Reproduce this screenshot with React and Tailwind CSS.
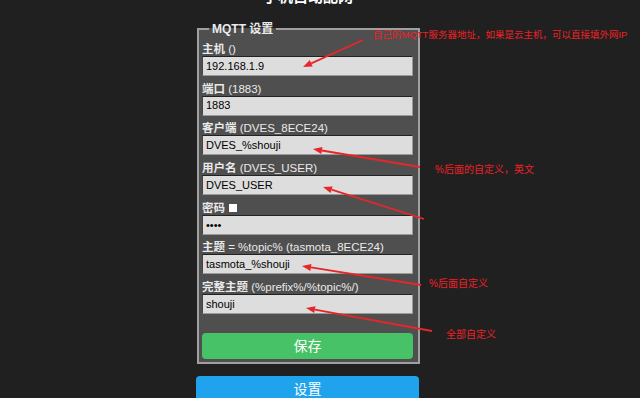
const fields = [
  { bold: '主机', note: ' ()', value: '192.168.1.9' },
  { bold: '端口', note: ' (1883)', value: '1883' },
  { bold: '客户端', note: ' (DVES_8ECE24)', value: 'DVES_%shouji' },
  { bold: '用户名', note: ' (DVES_USER)', value: 'DVES_USER' },
  { bold: '密码', check: true, value: '••••' },
  { bold: '主题', note: ' = %topic% (tasmota_8ECE24)', value: 'tasmota_%shouji' },
  { bold: '完整主题', note: ' (%prefix%/%topic%/)', value: 'shouji' },
];

const arrows = [
  [363, 40, 303, 67],
  [420, 167, 313, 149],
  [424, 219, 323, 187],
  [421, 285, 302, 266],
  [432, 331, 306, 308],
];

const notes = [
  { x: 373, y: 29, size: 'text-[9.5px]', text: '自己的MQTT服务器地址，如果是云主机，可以直接填外网IP' },
  { x: 435, y: 164, size: 'text-[10px]', text: '%后面的自定义，英文' },
  { x: 429, y: 278, size: 'text-[10px]', text: '%后面自定义' },
  { x: 446, y: 329, size: 'text-[10px]', text: '全部自定义' },
];

const Arrow = ({ x1, y1, x2, y2 }) => {
  const a = Math.atan2(y1 - y2, x1 - x2);
  const len = 9, w = 3.5;
  const bx = x2 + Math.cos(a) * len, by = y2 + Math.sin(a) * len;
  const px = -Math.sin(a) * w, py = Math.cos(a) * w;
  return (
    <g>
      <line x1={x1} y1={y1} x2={bx} y2={by} stroke="#e8262a" strokeWidth="1.8" />
      <polygon points={`${x2},${y2} ${bx + px},${by + py} ${bx - px},${by - py}`} fill="#e8262a" />
    </g>
  );
};

const App = () => {
  return (
    <div className="relative h-[398px] w-[640px] overflow-hidden bg-[#202020] text-[#eaeaea] font-['Liberation_Sans','Noto_Sans_CJK_SC',sans-serif]">
      <div className="ml-[196px] w-[224px]">
        <h2 className="-mt-[13px] h-[20px] text-center text-[15px] font-bold leading-[20px] text-white">手机自动配网</h2>

        <fieldset className="ml-[1px] mt-[15px] w-[223px] border-2 border-[#a0a0a0] bg-[#4f4f4f] pb-[3px] pl-[3px] pr-[5px]">
          <legend className="ml-[7px] px-[3px] text-[12px] font-bold leading-[14px] text-[#eaeaea]">MQTT 设置</legend>
          <div className="pt-[6px]">
            {fields.map((f, i) => (
              <div key={i} className={i === 0 ? '' : 'mt-[5.7px]'}>
                <div className="flex h-[14px] items-center whitespace-pre text-[11.5px] leading-[14px]">
                  <b className="text-[#eaeaea]">{f.bold}</b>
                  {f.note && <span>{f.note}</span>}
                  {f.check && <span className="ml-[4px] inline-block h-[8px] w-[8px] bg-white" />}
                </div>
                <div className="flex h-[20px] w-[211px] items-center border border-[#9a9a9a] border-l-[#444] border-t-[#222] bg-[#dddddd] pl-[3px] text-[11px] text-black">
                  {f.value}
                </div>
              </div>
            ))}
          </div>
          <button className="mt-[19px] h-[26px] w-[211px] rounded-[4px] bg-[#47c266] text-[14px] leading-[26px] text-white">保存</button>
        </fieldset>

        <button className="mt-[12px] h-[26px] w-[223px] rounded-[4px] bg-[#1fa3ec] text-[14px] leading-[26px] text-white">设置</button>
      </div>

      <svg className="pointer-events-none absolute left-0 top-0" width="640" height="398">
        {arrows.map(([x1, y1, x2, y2], i) => (
          <Arrow key={i} x1={x1} y1={y1} x2={x2} y2={y2} />
        ))}
      </svg>
      {notes.map((n, i) => (
        <div key={i} className={`absolute whitespace-nowrap leading-[12px] text-[#ee2026] ${n.size}`} style={{ left: n.x, top: n.y }}>
          {n.text}
        </div>
      ))}
    </div>
  );
};

export default App;
